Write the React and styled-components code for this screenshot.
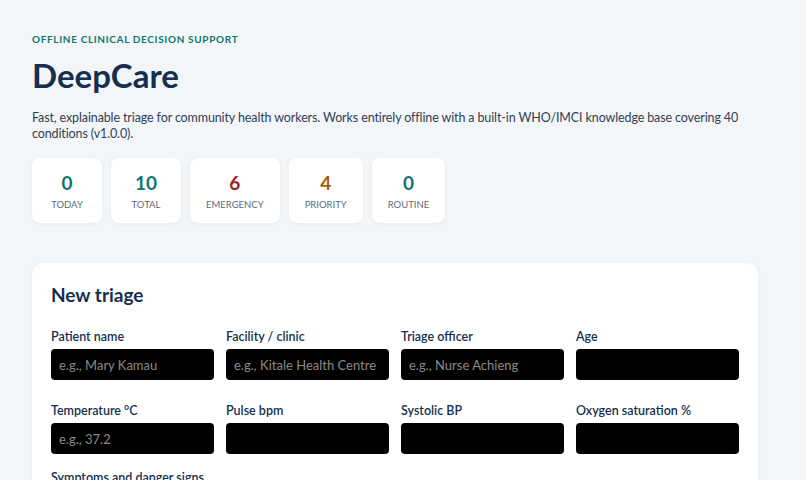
import React from "react";
import styled, { createGlobalStyle } from "styled-components";

const GlobalStyle = createGlobalStyle`
  html, body {
    margin: 0;
    padding: 0;
    background: #f3f6f8;
    font-family: Lato, "Open Sans", "Liberation Sans", sans-serif;
    color: #13294b;
  }
  * {
    box-sizing: border-box;
  }
`;

const stats = [
  { value: "0", label: "Today", tone: "#0f766e" },
  { value: "10", label: "Total", tone: "#0f766e" },
  { value: "6", label: "Emergency", tone: "#9b2226" },
  { value: "4", label: "Priority", tone: "#a16207" },
  { value: "0", label: "Routine", tone: "#0f766e" },
];

const fields = [
  { label: "Patient name", placeholder: "e.g., Mary Kamau" },
  { label: "Facility / clinic", placeholder: "e.g., Kitale Health Centre" },
  { label: "Triage officer", placeholder: "e.g., Nurse Achieng" },
  { label: "Age", placeholder: "" },
  { label: "Temperature °C", placeholder: "e.g., 37.2" },
  { label: "Pulse bpm", placeholder: "" },
  { label: "Systolic BP", placeholder: "" },
  { label: "Oxygen saturation %", placeholder: "" },
];

function App() {
  return (
    <>
      <GlobalStyle />
      <Page>
        <Header>
          <Eyebrow>Offline clinical decision support</Eyebrow>
          <Title>DeepCare</Title>
          <Lead>
            Fast, explainable triage for community health workers. Works
            entirely offline with a built-in WHO/IMCI knowledge base covering
            40 conditions (v1.0.0).
          </Lead>
        </Header>

        <StatRow>
          {stats.map((s) => (
            <StatCard key={s.label}>
              <StatValue $tone={s.tone}>{s.value}</StatValue>
              <StatLabel>{s.label}</StatLabel>
            </StatCard>
          ))}
        </StatRow>

        <Panel>
          <PanelTitle>New triage</PanelTitle>
          <FieldGrid>
            {fields.map((f) => (
              <Field key={f.label}>
                <Label>{f.label}</Label>
                <Input placeholder={f.placeholder} />
              </Field>
            ))}
          </FieldGrid>
          <SectionLabel>Symptoms and danger signs</SectionLabel>
        </Panel>
      </Page>
    </>
  );
}

export default App;

const Page = styled.main`
  width: 726px;
  margin-left: 32px;
  padding-top: 32px;
  padding-bottom: 40px;
`;

const Header = styled.header`
  display: flex;
  flex-direction: column;
`;

const Eyebrow = styled.div`
  font-size: 10px;
  font-weight: 700;
  letter-spacing: 0.65px;
  text-transform: uppercase;
  color: #0f766e;
  line-height: 14px;
`;

const Title = styled.h1`
  margin: 9px 0 0;
  font-size: 33px;
  font-weight: 700;
  line-height: 40px;
  color: #15304e;
`;

const Lead = styled.p`
  margin: 15px 0 0;
  font-size: 12.5px;
  letter-spacing: -0.12px;
  line-height: 16px;
  color: #2f3f55;
`;

const StatRow = styled.div`
  display: flex;
  gap: 9px;
  margin-top: 16px;
`;

const StatCard = styled.div`
  display: flex;
  flex-direction: column;
  align-items: center;
  min-width: 70px;
  height: 65px;
  padding: 13px 16px 0;
  background: #ffffff;
  border-radius: 8px;
  box-shadow: 0 1px 4px rgba(16, 42, 67, 0.05);
`;

const StatValue = styled.div`
  font-size: 19px;
  font-weight: 700;
  line-height: 24px;
  color: ${(p) => p.$tone};
`;

const StatLabel = styled.div`
  margin-top: 3px;
  font-size: 9.5px;
  line-height: 14px;
  text-transform: uppercase;
  color: #5b6b7d;
`;

const Panel = styled.section`
  margin-top: 40px;
  padding: 20px 19px 0;
  background: #ffffff;
  border-radius: 12px;
  box-shadow: 0 1px 4px rgba(16, 42, 67, 0.05);
`;

const PanelTitle = styled.h2`
  margin: 0;
  font-size: 19px;
  font-weight: 700;
  line-height: 24px;
  color: #15304e;
`;

const FieldGrid = styled.div`
  display: grid;
  grid-template-columns: repeat(4, minmax(0, 1fr));
  column-gap: 12px;
  row-gap: 23px;
  margin-top: 22px;
`;

const Field = styled.label`
  display: flex;
  flex-direction: column;
  gap: 4px;
`;

const Label = styled.span`
  font-size: 12.5px;
  font-weight: 600;
  line-height: 16px;
  color: #15304e;
`;

const Input = styled.input`
  width: 100%;
  min-width: 0;
  height: 31px;
  padding: 0 8px;
  border: none;
  border-radius: 4px;
  background: #000000;
  color: #ffffff;
  font-family: inherit;
  font-size: 13px;
  outline: none;

  &::placeholder {
    color: #8a8a8a;
  }
`;

const SectionLabel = styled.div`
  margin-top: 16px;
  padding-bottom: 40px;
  font-size: 12.5px;
  font-weight: 600;
  line-height: 16px;
  color: #15304e;
`;
